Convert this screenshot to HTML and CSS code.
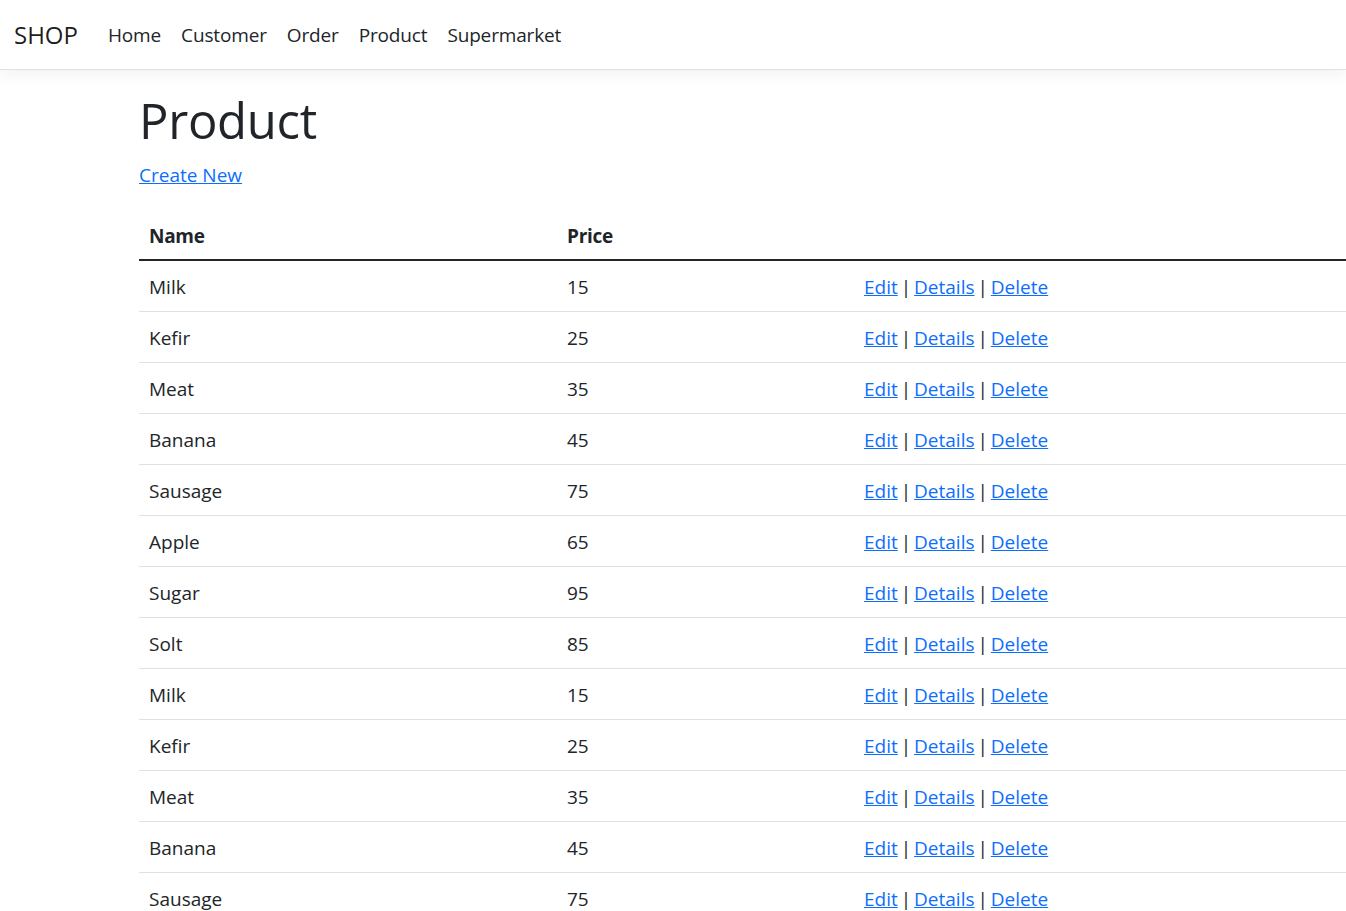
FILE: index.html
```html
<!DOCTYPE html>
<html lang="en">
<head>
<meta charset="utf-8">
<title>Product - SHOP</title>
<link rel="stylesheet" href="styles.css">
</head>
<body>
<header class="navbar">
  <a class="brand" href="#">SHOP</a>
  <nav class="nav">
    <a class="nav-link" href="#">Home</a>
    <a class="nav-link" href="#">Customer</a>
    <a class="nav-link" href="#">Order</a>
    <a class="nav-link" href="#">Product</a>
    <a class="nav-link" href="#">Supermarket</a>
  </nav>
</header>
<main class="container">
  <h1 class="title">Product</h1>
  <p class="create"><a href="#">Create New</a></p>
  <table class="table">
    <colgroup><col class="c-name"><col class="c-price"><col class="c-act"></colgroup>
    <thead>
      <tr><th>Name</th><th>Price</th><th></th></tr>
    </thead>
    <tbody>
      <tr><td>Milk</td><td>15</td><td class="actions"><a href="#">Edit</a> | <a href="#">Details</a> | <a href="#">Delete</a></td></tr>
      <tr><td>Kefir</td><td>25</td><td class="actions"><a href="#">Edit</a> | <a href="#">Details</a> | <a href="#">Delete</a></td></tr>
      <tr><td>Meat</td><td>35</td><td class="actions"><a href="#">Edit</a> | <a href="#">Details</a> | <a href="#">Delete</a></td></tr>
      <tr><td>Banana</td><td>45</td><td class="actions"><a href="#">Edit</a> | <a href="#">Details</a> | <a href="#">Delete</a></td></tr>
      <tr><td>Sausage</td><td>75</td><td class="actions"><a href="#">Edit</a> | <a href="#">Details</a> | <a href="#">Delete</a></td></tr>
      <tr><td>Apple</td><td>65</td><td class="actions"><a href="#">Edit</a> | <a href="#">Details</a> | <a href="#">Delete</a></td></tr>
      <tr><td>Sugar</td><td>95</td><td class="actions"><a href="#">Edit</a> | <a href="#">Details</a> | <a href="#">Delete</a></td></tr>
      <tr><td>Solt</td><td>85</td><td class="actions"><a href="#">Edit</a> | <a href="#">Details</a> | <a href="#">Delete</a></td></tr>
      <tr><td>Milk</td><td>15</td><td class="actions"><a href="#">Edit</a> | <a href="#">Details</a> | <a href="#">Delete</a></td></tr>
      <tr><td>Kefir</td><td>25</td><td class="actions"><a href="#">Edit</a> | <a href="#">Details</a> | <a href="#">Delete</a></td></tr>
      <tr><td>Meat</td><td>35</td><td class="actions"><a href="#">Edit</a> | <a href="#">Details</a> | <a href="#">Delete</a></td></tr>
      <tr><td>Banana</td><td>45</td><td class="actions"><a href="#">Edit</a> | <a href="#">Details</a> | <a href="#">Delete</a></td></tr>
      <tr><td>Sausage</td><td>75</td><td class="actions"><a href="#">Edit</a> | <a href="#">Details</a> | <a href="#">Delete</a></td></tr>
    </tbody>
  </table>
</main>
</body>
</html>
```
FILE: styles.css
```css
html {
  overflow: hidden;
  scrollbar-width: none;
}
html::-webkit-scrollbar { display: none; }

body {
  margin: 0;
  font-family: "Segoe UI", "Open Sans", "Noto Sans", sans-serif;
  font-size: 19px;
  line-height: 30px;
  color: #212529;
  background: #fff;
}

a { color: #0d6efd; }

.navbar {
  display: flex;
  align-items: center;
  height: 69px;
  padding: 0 15px 0 14px;
  border-bottom: 1px solid #dee2e6;
  box-shadow: 0 5px 15px rgba(0, 0, 0, 0.05);
  background: #fff;
  margin-bottom: 20px;
}

.brand {
  font-size: 24px;
  color: rgba(0, 0, 0, 0.9);
  text-decoration: none;
  margin-right: 20px;
  line-height: 30px;
}

.nav {
  display: flex;
}

.nav-link {
  color: #212529;
  text-decoration: none;
  padding: 10px 10px;
  letter-spacing: -0.15px;
}

.container {
  margin-left: 124px;
  padding: 0 15px;
  width: 1425px;
}

.title {
  font-size: 49px;
  font-weight: 500;
  line-height: 60px;
  margin: 0 0 10px;
  letter-spacing: -0.3px;
}

.create {
  margin: 1px 0 19px;
}

.table {
  width: 1425px;
  border-collapse: collapse;
  table-layout: fixed;
}

.c-name { width: 418px; }
.c-price { width: 297px; }

.table th,
.table td {
  padding: 11px 10px 9px;
  text-align: left;
  vertical-align: top;
  border-bottom: 1px solid #dee2e6;
}

.table th {
  font-weight: 700;
  letter-spacing: -0.3px;
  padding-top: 12px;
  padding-bottom: 8px;
}

.table thead th {
  border-bottom: 2px solid #212529;
}

.actions {
  word-spacing: -2px;
}
```
